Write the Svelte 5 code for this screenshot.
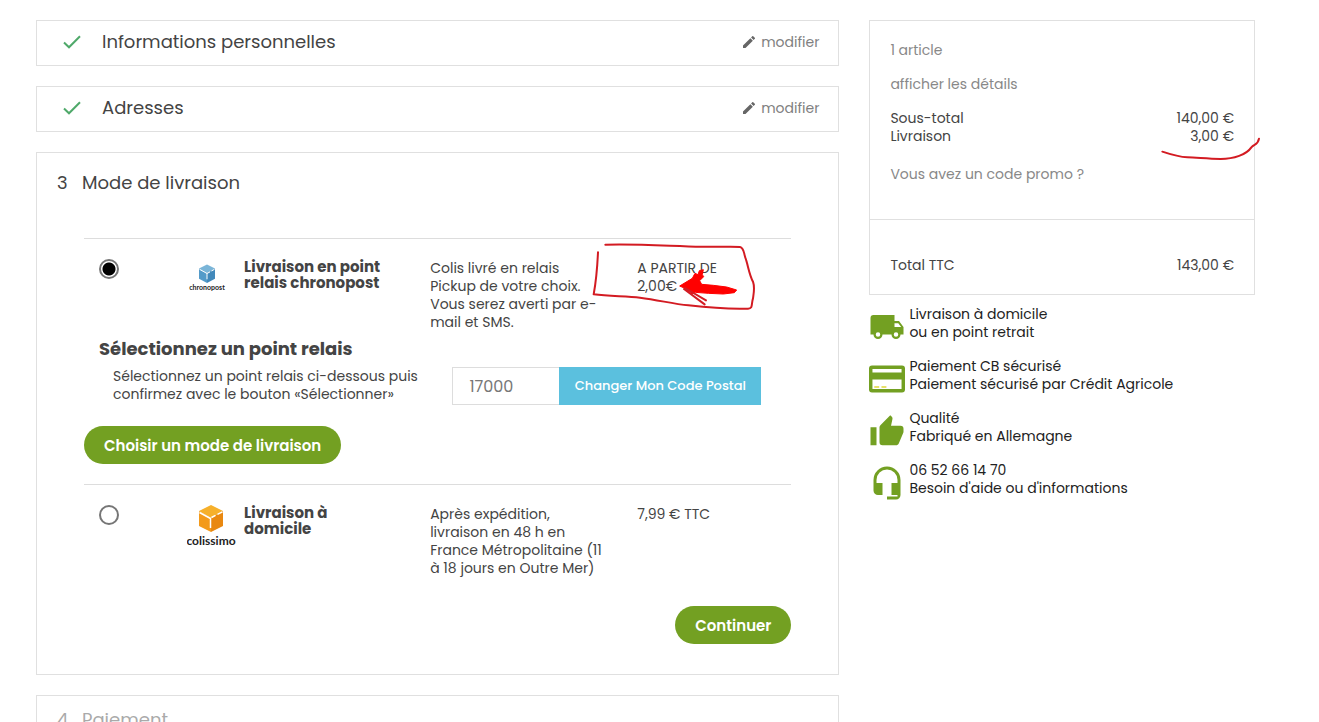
<script lang="ts">
	type Carrier = {
		id: string;
		name: string;
		delay: string;
		price: string;
	};

	const doneSteps = ['Informations personnelles', 'Adresses'];

	const carriers: Carrier[] = [
		{
			id: 'chronopost',
			name: 'Livraison en point relais chronopost',
			delay: 'Colis livré en relais Pickup de votre choix. Vous serez averti par e-mail et SMS.',
			price: 'A PARTIR DE 2,00€',
		},
		{
			id: 'colissimo',
			name: 'Livraison à domicile',
			delay: 'Après expédition, livraison en 48 h en France Métropolitaine (11 à 18 jours en Outre Mer)',
			price: '7,99 € TTC',
		},
	];

	const reassurance = [
		{ icon: 'truck', title: 'Livraison à domicile', text: 'ou en point retrait' },
		{ icon: 'card', title: 'Paiement CB sécurisé', text: 'Paiement sécurisé par Crédit Agricole' },
		{ icon: 'thumb', title: 'Qualité', text: 'Fabriqué en Allemagne' },
		{ icon: 'headset', title: '06 52 66 14 70', text: "Besoin d'aide ou d'informations" },
	];

	let selected = $state('chronopost');
	let postcode = $state('17000');
</script>

<div class="page">
	<main class="steps">
		{#each doneSteps as step}
			<section class="box done">
				<svg class="check" viewBox="0 0 18 14" aria-hidden="true">
					<path d="M1 7.5 6 12.3 17 1.3" />
				</svg>
				<h1 class="stepTitle">{step}</h1>
				<a class="edit" href="#modifier">
					<svg class="pencil" viewBox="3 3 18 18" aria-hidden="true">
						<path d="M3 17.25V21h3.75L17.8 9.94l-3.75-3.75L3 17.25zM20.7 7.04a1 1 0 0 0 0-1.41l-2.34-2.34a1 1 0 0 0-1.41 0l-1.83 1.83 3.75 3.75 1.83-1.83z" />
					</svg>
					modifier
				</a>
			</section>
		{/each}

		<section class="box delivery">
			<h1 class="stepTitle"><span class="number">3</span>Mode de livraison</h1>

			<div class="carriers">
				{#each carriers as { id, name, delay, price }}
					<div class="carrier">
						<div class="option">
							<input class="radio" type="radio" name="carrier" id={id} value={id} bind:group={selected} />
							{#if id === 'chronopost'}
								<svg class="logo" viewBox="0 0 52 44" role="img" aria-label="chronopost">
									<path fill="#7ab5d8" d="m20 5.500 8 4-8 4.800-8-4.800z" />
									<path fill="#549bc9" d="m12 9.500 8 4.800V24l-8-4.200z" />
									<path fill="#4289bb" d="m28 9.500-8 4.800V24l8-4.200z" />
									<path class="seam" d="m12.500 10.300 7.500 4.200 3-1.600M24.500 12l3-1.700M20 14.300v6" />
									<text class="chrono" x="20" y="31">chronopost</text>
								</svg>
							{:else}
								<svg class="logo" viewBox="0 0 52 44" role="img" aria-label="colissimo">
									<path fill="#f6b02b" d="m24 0 12 6-12 7-12-7z" />
									<path fill="#f39a1b" d="m12 6 12 7v14l-12-6z" />
									<path fill="#e98810" d="m36 6-12 7v14l12-6z" />
									<path class="seam wide" d="m12.500 7.500 11 6V23M24.500 12.500l4-2.200M30.500 9.300l5-2.500" />
									<text class="coli" x="24" y="40">colissimo</text>
								</svg>
							{/if}
							<label class="name" for={id}>{name}</label>
							<p class="delay">{delay}</p>
							<div class="price">
								{price}
								{#if id === 'chronopost'}
									<svg class="circled" viewBox="0 0 660 300" aria-hidden="true">
										<path class="pen" d="M54 67C52 110 49 150 41 193C90 199 140 198 180 203C240 211 280 222 325 226C385 233 445 238 504 236C520 235 513 223 519 205C522 186 525 172 519 155C507 133 504 104 496 83C491 68 492 53 480 51C450 48 430 52 365 50C270 48 170 41 76 44" />
										<path class="arrow" d="M299 168 337 145 345 130 354 134 358 122 370 119 367 134 371 140 359 152 365 163 400 166 440 171 470 180 463 188 430 192 385 190 346 187 336 192 326 180z" />
										<path class="pen" d="M315 174 378 211M312 177 374 223" />
									</svg>
								{/if}
							</div>
						</div>

						{#if id === 'chronopost'}
							<h2 class="relayTitle">Sélectionnez un point relais</h2>
							<div class="relay">
								<label class="relayHint" for="postcode">
									Sélectionnez un point relais ci-dessous puis confirmez avec le bouton «Sélectionner»
								</label>
								<input class="postcode" id="postcode" type="text" bind:value={postcode} />
								<button class="change" type="button">Changer Mon Code Postal</button>
							</div>
							<button class="pill" type="button">Choisir un mode de livraison</button>
						{/if}
					</div>
				{/each}
			</div>

			<div class="actions">
				<button class="pill" type="submit">Continuer</button>
			</div>
		</section>

		<section class="box next">
			<h1 class="stepTitle"><span class="number">4</span>Paiement</h1>
		</section>
	</main>

	<aside>
		<div class="box">
			<div class="summary">
				<p class="muted">1 article</p>
				<a class="muted" href="#details">afficher les détails</a>
				<div>
					<div class="line"><span>Sous-total</span><span>140,00 €</span></div>
					<div class="line">
						<span>Livraison</span>
						<span class="shipping">
							3,00 €
							<svg class="underlined" viewBox="0 0 360 210" aria-hidden="true">
								<path class="pen" d="M40 155C70 165 88 171 115 172C145 173 175 176 215 177C255 177 292 164 307 142C316 132 327 135 330 116" />
							</svg>
						</span>
					</div>
				</div>
				<a class="muted promo" href="#promo">Vous avez un code promo ?</a>
			</div>
			<div class="total line"><span>Total TTC</span><span>143,00 €</span></div>
		</div>

		<ul class="reassurance">
			{#each reassurance as { icon, title, text }}
				<li>
					<svg class="icon" viewBox="0 0 24 24" aria-hidden="true">
						{#if icon === 'truck'}
							<path d="M20 8h-3V4H3a2 2 0 0 0-2 2v11h2a3 3 0 0 0 6 0h6a3 3 0 0 0 6 0h2v-5l-3-4zM6 18.500a1.500 1.500 0 1 1 0-3 1.500 1.500 0 0 1 0 3zm13.500-9 1.960 2.500H17V9.500h2.500zM18 18.500a1.500 1.500 0 1 1 0-3 1.500 1.500 0 0 1 0 3z" />
						{:else if icon === 'card'}
							<path fill-rule="evenodd" d="M2 3h20a2 2 0 0 1 2 2v14a2 2 0 0 1-2 2H2a2 2 0 0 1-2-2V5a2 2 0 0 1 2-2zm.300 2.300v2.400h19.400V5.300zm0 7v6.400h19.400v-6.400z" />
							<path class="digits" d="M3.500 17.300h3.300M8.300 17.300h3.300" />
						{:else if icon === 'thumb'}
							<path d="M1 21.500h4v-12H1v12zm22-11a2 2 0 0 0-2-2h-6.310l.950-4.570.030-.320c0-.410-.170-.790-.440-1.060L14.170 1.500 7.590 8.090C7.220 8.450 7 8.950 7 9.500v10a2 2 0 0 0 2 2h9c.830 0 1.540-.500 1.840-1.220l3.020-7.050c.090-.230.140-.470.140-.730v-2z" />
						{:else}
							<path d="M12 1a9 9 0 0 0-9 9v7a3 3 0 0 0 3 3h3v-8H5v-2a7 7 0 0 1 14 0v2h-4v8h4v1h-7v2h6a3 3 0 0 0 3-3V10a9 9 0 0 0-9-9z" />
						{/if}
					</svg>
					<p>{title}<br />{text}</p>
				</li>
			{/each}
		</ul>
	</aside>
</div>

<style>
	:global(body) {
		background-color: #fff;
	}
	.page {
		box-sizing: border-box;
		height: 100vh;
		overflow: hidden;
		display: grid;
		grid-template-columns: minmax(0, 25fr) minmax(0, 12fr);
		column-gap: 30px;
		padding: 20px 64px 0 36px;
		font-family: Poppins, Inter, sans-serif;
		font-size: 14px;
		font-weight: 400;
		line-height: 18px;
		color: #444;
	}
	h1, h2, p, ul {
		margin: 0;
		padding: 0;
	}
	a {
		text-decoration: none;
	}
	button, input {
		font-family: inherit;
	}
	.steps {
		display: flex;
		flex-direction: column;
		gap: 20px;
	}
	.box {
		border: 1px solid #e0e0e0;
	}
	.stepTitle {
		font-size: 18px;
		font-weight: 400;
		line-height: 20px;
	}
	.number {
		display: inline-block;
		width: 25px;
	}
	.done {
		display: flex;
		align-items: center;
		padding: 11px 19px 13px 26px;

		& .stepTitle {
			flex: 1;
		}
	}
	.check {
		width: 18px;
		height: 14px;
		margin-right: 21px;
		fill: none;
		stroke: #4fa96a;
		stroke-width: 2;
	}
	.edit {
		display: flex;
		align-items: center;
		gap: 6px;
		color: #808080;
	}
	.pencil {
		width: 12px;
		height: 12px;
		fill: #666;
	}

	.delivery {
		padding: 20px 47px 30px;

		& > .stepTitle {
			margin: 0 0 45px -27px;
		}
	}
	.carrier {
		border-top: 1px solid #ddd;
		padding: 20px 0;
	}
	.carrier:last-child {
		padding-bottom: 29px;
	}
	.option {
		display: grid;
		grid-template-columns: 103fr 57fr 186fr 207fr 154fr;
		align-items: start;
	}
	.radio {
		appearance: none;
		box-sizing: border-box;
		width: 20px;
		height: 20px;
		margin: 0 0 0 15px;
		border: 2px solid #767676;
		border-radius: 50%;

		&:checked {
			background: radial-gradient(circle, #000 6px, #fff 7px);
		}
	}
	.logo {
		width: 52px;
		height: 44px;

		& text {
			text-anchor: middle;
			font-family: Lato, sans-serif;
			font-weight: 700;
			fill: #222;
		}
		& .chrono {
			font-size: 7px;
		}
		& .coli {
			font-size: 12px;
		}
	}
	.seam {
		fill: none;
		stroke: #fff;
		stroke-width: 1;
	}
	.seam.wide {
		stroke-width: 1.5;
	}
	.name {
		font-size: 15px;
		font-weight: 700;
		line-height: 16px;
		padding-right: 45px;
	}
	.delay {
		padding-right: 32px;
	}
	.price {
		position: relative;
		padding-right: 45px;
	}
	.circled {
		position: absolute;
		left: -57px;
		top: -29px;
		width: 220px;
		height: 100px;
	}
	.pen {
		fill: none;
		stroke: #d31b22;
		stroke-width: 6;
		stroke-linecap: round;
		stroke-linejoin: round;
	}
	.arrow {
		fill: #f00;
		stroke: #f00;
		stroke-width: 3;
		stroke-linejoin: round;
	}
	.relayTitle {
		margin-left: 15px;
		font-size: 18px;
		font-weight: 700;
		line-height: 36px;
	}
	.relay {
		display: flex;
		padding: 0 30px 0 29px;
		margin-bottom: 21px;
	}
	.relayHint {
		flex: 1;
		padding-right: 20px;
	}
	.postcode {
		box-sizing: border-box;
		width: 107px;
		height: 38px;
		border: 1px solid #ddd;
		border-right: 0;
		padding: 0 16px;
		font-size: 16px;
		font-weight: 400;
		color: #777;
	}
	.change {
		width: 202px;
		height: 38px;
		border: 0;
		padding: 0;
		background-color: #5bc0de;
		font-size: 13px;
		font-weight: 500;
		color: #fff;
	}
	.pill {
		height: 38px;
		border: 0;
		border-radius: 19px;
		padding: 0 20px;
		background-color: #73a022;
		font-size: 15px;
		font-weight: 600;
		color: #fff;
	}
	.actions {
		display: flex;
		justify-content: flex-end;
	}
	.next {
		padding: 14px 20px 12px;
		color: #aaa;
	}

	.summary {
		display: flex;
		flex-direction: column;
		gap: 16px;
		padding: 20px 20px 36px;
	}
	.muted {
		color: #888;
	}
	.promo {
		padding-top: 4px;
	}
	.line {
		display: flex;
		justify-content: space-between;
	}
	.shipping {
		position: relative;
	}
	.underlined {
		position: absolute;
		right: -35px;
		top: -27px;
		width: 120px;
		height: 70px;
	}
	.total {
		border-top: 1px solid #e0e0e0;
		padding: 36px 20px 20px;
	}
	.reassurance {
		display: flex;
		flex-direction: column;
		gap: 12px;
		margin-top: 10px;
		list-style: none;
		color: #222;

		& li {
			display: flex;
			gap: 4px;
		}
	}
	.icon {
		flex-shrink: 0;
		width: 36px;
		height: 36px;
		margin-top: 4px;
		fill: #73a022;
	}
	.digits {
		stroke: #dfd83a;
		stroke-width: 1;
	}
</style>
